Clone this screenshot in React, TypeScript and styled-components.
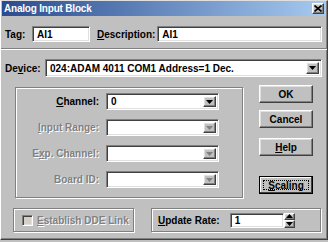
import React from 'react'
import styled, { createGlobalStyle, css } from 'styled-components'

const GlobalStyle = createGlobalStyle`
  html, body {
    margin: 0;
    padding: 0;
    background: #c0c0c0;
  }
  body {
    font-family: "Liberation Sans", Arial, sans-serif;
    font-size: 10px;
    font-weight: bold;
    color: #000;
  }
`

const raised = css`
  border: 1px solid;
  border-color: #ffffff #404040 #404040 #ffffff;
  box-shadow: inset -1px -1px #808080, inset 1px 1px #dfdfdf;
`

const sunken = css`
  border: 1px solid;
  border-color: #808080 #ffffff #ffffff #808080;
  box-shadow: inset 1px 1px #404040, inset -1px -1px #dfdfdf;
`

const etched = css`
  border: 1px solid #808080;
  box-shadow: inset 1px 1px #ffffff, 1px 1px #ffffff;
`

const Window = styled.div`
  box-sizing: border-box;
  width: 328px;
  height: 240px;
  background: #c0c0c0;
  border: 1px solid;
  border-color: #dfdfdf #404040 #404040 #ffffff;
  box-shadow: inset -1px -1px #808080;
  display: flex;
  flex-direction: column;
`

const TitleBar = styled.div`
  height: 15px;
  margin: 0 1px;
  background: linear-gradient(to right, #2a4b8f, #a6caf0);
  display: flex;
  align-items: center;
  justify-content: space-between;
  padding: 0 2px 0 2px;
`

const Title = styled.span`
  color: #fff;
  font-size: 10px;
  letter-spacing: -0.2px;
`

const CloseButton = styled.div`
  box-sizing: border-box;
  width: 12px;
  height: 11px;
  background: #c0c0c0;
  ${raised};
  display: flex;
  align-items: center;
  justify-content: center;
`

const Content = styled.div`
  padding: 0 5px 0 4px;
  display: flex;
  flex-direction: column;
`

const TopRow = styled.div`
  display: flex;
  align-items: center;
  height: 16px;
  margin-top: 10px;
`

const Label = styled.span<{ $width?: number; $disabled?: boolean; $align?: string }>`
  display: inline-block;
  white-space: nowrap;
  ${(p) => (p.$width ? `width: ${p.$width}px;` : '')}
  text-align: ${(p) => p.$align || 'left'};
  ${(p) =>
    p.$disabled &&
    css`
      color: #808080;
      text-shadow: 1px 1px #ffffff;
    `}
  u {
    text-decoration: underline;
  }
`

const Field = styled.div<{ $width?: number; $height?: number }>`
  box-sizing: border-box;
  ${(p) => (p.$width ? `width: ${p.$width}px;` : 'flex: 1;')}
  height: ${(p) => p.$height || 16}px;
  background: #fff;
  ${sunken};
  display: flex;
  align-items: center;
  padding-left: 4px;
`

const Separator = styled.div`
  height: 1px;
  margin-top: 6px;
  background: #808080;
  border-bottom: 1px solid #fff;
`

const DeviceRow = styled.div`
  display: flex;
  align-items: center;
  margin-top: 9px;
  height: 18px;
`

const Combo = styled.div<{ $width?: number; $height?: number }>`
  box-sizing: border-box;
  ${(p) => (p.$width ? `width: ${p.$width}px;` : 'flex: 1;')}
  height: ${(p) => p.$height || 18}px;
  background: #fff;
  ${sunken};
  display: flex;
  align-items: stretch;
  padding: 2px;
`

const ComboText = styled.span`
  flex: 1;
  padding-left: 2px;
  display: flex;
  align-items: center;
`

const DropButton = styled.div`
  box-sizing: border-box;
  width: 13px;
  background: #c0c0c0;
  ${raised};
  display: flex;
  align-items: center;
  justify-content: center;
`

const Middle = styled.div`
  display: flex;
  margin-top: 10px;
`

const GroupBox = styled.div`
  box-sizing: border-box;
  width: 228px;
  height: 111px;
  margin-left: 10px;
  ${etched};
  padding-top: 5px;
  display: flex;
  flex-direction: column;
  gap: 9px;
`

const GroupRow = styled.div`
  display: flex;
  align-items: center;
  gap: 7px;
`

const ButtonColumn = styled.div`
  display: flex;
  flex-direction: column;
  margin-left: 16px;
  margin-top: -2px;
`

const Button = styled.div<{ $top: number; $focused?: boolean }>`
  box-sizing: border-box;
  width: 54px;
  height: 18px;
  margin-top: ${(p) => p.$top}px;
  background: #c0c0c0;
  ${raised};
  display: flex;
  align-items: center;
  justify-content: center;
  ${(p) =>
    p.$focused &&
    css`
      border-color: #000;
      box-shadow: inset -1px -1px #404040, inset 1px 1px #fff;
      padding: 3px;
    `}
`

const FocusRing = styled.span`
  box-sizing: border-box;
  flex: 1;
  align-self: stretch;
  border: 1px dotted #000;
  display: flex;
  align-items: center;
  justify-content: center;
`

const BottomRow = styled.div`
  display: flex;
  margin-top: 10px;
`

const Frame = styled.div<{ $width: number; $left: number }>`
  box-sizing: border-box;
  width: ${(p) => p.$width}px;
  height: 24px;
  margin-left: ${(p) => p.$left}px;
  ${etched};
  display: flex;
  align-items: center;
`

const CheckBox = styled.div`
  box-sizing: border-box;
  width: 11px;
  height: 11px;
  margin: 0 4px 0 8px;
  background: #d4d0c8;
  ${sunken};
`

const Spinner = styled.div`
  display: flex;
  flex-direction: column;
  width: 11px;
  height: 15px;
`

const SpinButton = styled.div`
  box-sizing: border-box;
  flex: 1;
  background: #c0c0c0;
  ${raised};
  display: flex;
  align-items: center;
  justify-content: center;
`

const Arrow: React.FC<{ disabled?: boolean; up?: boolean }> = ({ disabled, up }) => (
  <svg width="7" height="4" viewBox="0 0 7 4">
    <polygon
      points={up ? '3.5,0 7,4 0,4' : '0,0 7,0 3.5,4'}
      fill={disabled ? '#808080' : '#000'}
    />
  </svg>
)

const ComboBox: React.FC<{
  value?: string
  width?: number
  height?: number
  disabled?: boolean
}> = ({ value, width, height, disabled }) => (
  <Combo $width={width} $height={height}>
    <ComboText>{value}</ComboText>
    <DropButton>
      <Arrow disabled={disabled} />
    </DropButton>
  </Combo>
)

const channelRows = [
  { label: <><u>C</u>hannel:</>, value: '0', disabled: false },
  { label: <><u>I</u>nput Range:</>, value: '', disabled: true },
  { label: <>E<u>x</u>p. Channel:</>, value: '', disabled: true },
  { label: <>Board ID:</>, value: '', disabled: true },
]

const App: React.FC = () => {
  return (
    <>
      <GlobalStyle />
      <Window>
        <TitleBar>
          <Title>Analog Input Block</Title>
          <CloseButton>
            <svg width="8" height="7" viewBox="0 0 8 7">
              <path d="M0.5 0.5 L7.5 6.5 M7.5 0.5 L0.5 6.5" stroke="#000" strokeWidth="1.6" />
            </svg>
          </CloseButton>
        </TitleBar>
        <Content>
          <TopRow>
            <Label $width={27}>Tag:</Label>
            <Field $width={58}>AI1</Field>
            <Label style={{ marginLeft: 7, marginRight: 2 }}>
              <u>D</u>escription:
            </Label>
            <Field>AI1</Field>
          </TopRow>
        </Content>
        <Separator />
        <Content>
          <DeviceRow>
            <Label $width={40}>
              De<u>v</u>ice:
            </Label>
            <ComboBox value="024:ADAM 4011 COM1 Address=1 Dec." />
          </DeviceRow>
          <Middle>
            <GroupBox>
              {channelRows.map((row, i) => (
                <GroupRow key={i}>
                  <Label $width={83} $align="right" $disabled={row.disabled}>
                    {row.label}
                  </Label>
                  <ComboBox value={row.value} width={113} height={17} disabled={row.disabled} />
                </GroupRow>
              ))}
            </GroupBox>
            <ButtonColumn>
              <Button $top={0}>OK</Button>
              <Button $top={7}>Cancel</Button>
              <Button $top={10}>
                <span>
                  <u>H</u>elp
                </span>
              </Button>
              <Button $top={20} $focused>
                <FocusRing>
                  <span>
                    <u>S</u>caling
                  </span>
                </FocusRing>
              </Button>
            </ButtonColumn>
          </Middle>
          <BottomRow>
            <Frame $width={121} $left={8}>
              <CheckBox />
              <Label $disabled>
                <u>E</u>stablish DDE Link
              </Label>
            </Frame>
            <Frame $width={170} $left={17}>
              <Label style={{ marginLeft: 6, marginRight: 10 }}>
                <u>U</u>pdate Rate:
              </Label>
              <Field $width={54} $height={15}>1</Field>
              <Spinner>
                <SpinButton>
                  <Arrow up />
                </SpinButton>
                <SpinButton>
                  <Arrow />
                </SpinButton>
              </Spinner>
            </Frame>
          </BottomRow>
        </Content>
      </Window>
    </>
  )
}

export default App
